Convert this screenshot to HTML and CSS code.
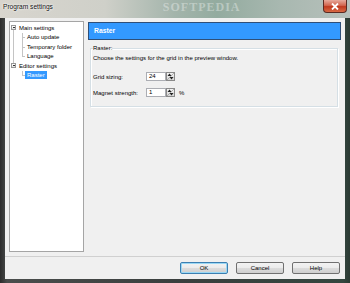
FILE: index.html
```html
<!DOCTYPE html>
<html lang="en">
<head>
  <meta charset="UTF-8">
  <title>Program settings</title>
  <link rel="stylesheet" href="styles.css">
</head>
<body>

<div class="window">
  <div class="titlebar">
    <span class="title">Program settings</span>
    <span class="mark">SOFTPEDIA</span>
    <span class="close">
      <svg width="8" height="7" viewBox="0 0 8 7"><path d="M1 0.5 L7 6.5 M7 0.5 L1 6.5" stroke="#fff" stroke-width="1.8"/></svg>
    </span>
  </div>

  <div class="client">
    <div class="main">
      <ul class="tree">
        <li class="branch">
          <div class="row"><span class="toggle"></span><span class="label">Main settings</span></div>
          <ul class="children">
            <li class="leaf"><span class="label">Auto update</span></li>
            <li class="leaf"><span class="label">Temporary folder</span></li>
            <li class="leaf last"><span class="label">Language</span></li>
          </ul>
        </li>
        <li class="branch last">
          <div class="row"><span class="toggle"></span><span class="label">Editor settings</span></div>
          <ul class="children">
            <li class="leaf last"><span class="label selected">Raster</span></li>
          </ul>
        </li>
      </ul>

      <div class="page">
        <div class="page-head">Raster</div>
        <fieldset class="group">
          <legend>Raster:</legend>
          <p class="hint">Choose the settings for the grid in the preview window.</p>
          <div class="field">
            <label>Grid sizing:</label>
            <span class="num">24</span>
            <span class="spin"><svg width="9" height="9" viewBox="0 0 9 9"><path d="M1.5 4 L3.5 1.5 L5.5 4 Z M3.5 5 L5.5 7.5 L7.5 5 Z" fill="#222"/><path d="M8 1 L1 8" stroke="#888" stroke-width="0.6"/></svg></span>
          </div>
          <div class="field">
            <label>Magnet strength:</label>
            <span class="num">1</span>
            <span class="spin"><svg width="9" height="9" viewBox="0 0 9 9"><path d="M1.5 4 L3.5 1.5 L5.5 4 Z M3.5 5 L5.5 7.5 L7.5 5 Z" fill="#222"/><path d="M8 1 L1 8" stroke="#888" stroke-width="0.6"/></svg></span>
            <span class="unit">%</span>
          </div>
        </fieldset>
      </div>
    </div>

    <div class="buttons">
      <button class="btn default">OK</button>
      <button class="btn">Cancel</button>
      <button class="btn">Help</button>
    </div>
  </div>
</div>

</body>
</html>
```

FILE: styles.css
```css
body {
  margin: 0;
  font-family: 'Liberation Sans', Arial, sans-serif;
  font-size: 6px;
  color: #000;
}
.window {
  width: 350px;
  height: 283px;
  display: flex;
  flex-direction: column;
  background: linear-gradient(to right, #2c2c2c 0, #4a4d4c 2%, #3a3f3e 50%, #34463f 98%, #2b3a33 100%);
}
.titlebar {
  height: 18px;
  display: flex;
  align-items: flex-start;
  background: linear-gradient(to right, #d8d5ce 0, #cfd0c9 30%, #a3b4ab 50%, #93ab9f 62%, #a8b8b0 80%, #b7c0bb 100%);
}
.title {
  padding-left: 3px;
  line-height: 14px;
  font-size: 6.6px;
  color: #111;
  text-shadow: 0 0 3px #fff, 0 0 2px #fff;
}
.mark {
  margin-left: 110px;
  margin-top: 1px;
  font-family: 'Liberation Serif', serif;
  font-weight: bold;
  font-size: 12px;
  letter-spacing: 1px;
  line-height: 13px;
  color: rgba(255, 255, 255, 0.35);
}
.close {
  margin-left: auto;
  margin-right: 3px;
  width: 24px;
  height: 13px;
  display: flex;
  align-items: center;
  justify-content: center;
  box-sizing: border-box;
  border: 1px solid #5a2a22;
  border-top: none;
  border-radius: 0 0 4px 4px;
  background: linear-gradient(to bottom, #e7aa9c 0, #d2664f 45%, #c03a1f 55%, #d86a45 100%);
}
.close svg {
  display: block;
}
.client {
  margin: 0 5px 4px 5px;
  height: 261px;
  background: #f0f0f0;
  display: flex;
  flex-direction: column;
}
.main {
  display: flex;
  padding: 3px 4px 0 4px;
}

/* tree */
.tree, .children {
  list-style: none;
  margin: 0;
  padding: 0;
}
.tree {
  width: 75px;
  height: 231px;
  box-sizing: border-box;
  border: 1px solid #a5a5a5;
  background: #fff;
  padding-top: 1px;
}
.tree li {
  position: relative;
}
.row, .leaf {
  height: 9.5px;
  display: flex;
  align-items: center;
}
.toggle {
  width: 5px;
  height: 5px;
  box-sizing: border-box;
  margin-left: 1px;
  border: 1px solid #979797;
  background: linear-gradient(#fff, #e4e4e4);
  position: relative;
}
.toggle::after {
  content: '';
  position: absolute;
  left: 0.5px;
  top: 1px;
  width: 2px;
  height: 1px;
  background: #333;
}
.row .label {
  margin-left: 1px;
}
.label {
  padding: 0 2px;
  line-height: 8px;
  white-space: nowrap;
}
.leaf {
  padding-left: 15px;
}
.leaf::before {
  content: '';
  position: absolute;
  left: 12px;
  top: 0;
  bottom: 0;
  border-left: 1px solid #c4c4c4;
}
.leaf.last::before {
  bottom: 4.5px;
}
.leaf::after {
  content: '';
  position: absolute;
  left: 12px;
  top: 4.5px;
  width: 3px;
  border-top: 1px solid #c4c4c4;
}
.branch::before {
  content: '';
  position: absolute;
  left: 3px;
  top: 7px;
  bottom: -3px;
  border-left: 1px solid #c4c4c4;
}
.branch.last::before {
  display: none;
}
.selected {
  background: #3399ff;
  color: #fff;
}

/* page */
.page {
  margin-left: 4px;
  width: 253px;
}
.page-head {
  margin-top: 1px;
  height: 18px;
  box-sizing: border-box;
  border: 1px solid #2f4f78;
  background: #3399ff;
  color: #fff;
  font-weight: bold;
  font-size: 6.8px;
  line-height: 16px;
  padding-left: 5px;
}
.group {
  margin: 4.5px 3px 0 2px;
  padding: 0 2px 9px 2px;
  border: 1px solid #d5dfe5;
  box-shadow: inset 1px 1px 0 #fff, 1px 1px 0 #fff;
}
.group legend {
  padding: 0;
  line-height: 7px;
}
.hint {
  margin: 3px 0 0 0;
  line-height: 7px;
}
.field {
  display: flex;
  align-items: center;
  height: 9px;
  margin-top: 10.5px;
}
.field + .field {
  margin-top: 7px;
}
.field label {
  width: 53px;
}
.num {
  width: 20px;
  height: 9px;
  box-sizing: border-box;
  border: 1px solid #abadb3;
  background: #fff;
  padding-left: 2px;
  line-height: 7px;
}
.spin {
  width: 9px;
  height: 9px;
  box-sizing: border-box;
  border: 1px solid #8a8a8a;
  background: linear-gradient(#f4f4f4, #d6d6d6);
}
.spin svg {
  display: block;
  margin: -1px;
}
.unit {
  margin-left: 4px;
}

/* buttons */
.buttons {
  margin-top: 4px;
  border-top: 1px solid #d0d0d0;
  padding: 5px 5px 0 0;
  display: flex;
  justify-content: flex-end;
  gap: 8px;
}
.btn {
  width: 48px;
  height: 12px;
  padding: 0;
  font-family: inherit;
  font-size: 6px;
  color: #000;
  border: 1px solid #707070;
  border-radius: 2px;
  background: linear-gradient(to bottom, #f3f3f3 0, #ebebeb 50%, #dddddd 50%, #cfcfcf 100%);
}
.btn.default {
  border-color: #3c7fb1;
  box-shadow: inset 0 0 0 1px #9ad8f5;
}
```
